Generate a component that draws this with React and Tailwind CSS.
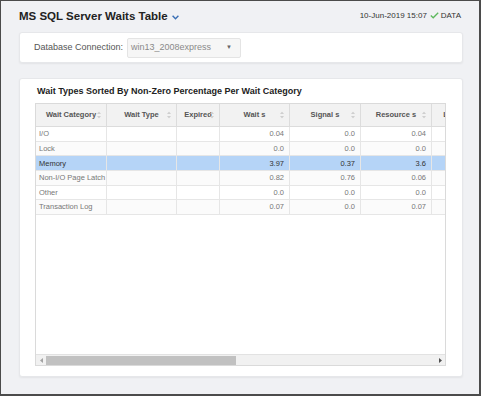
import React from "react";

const columns = [
  { label: "Wait Category", w: "w-[71px]", align: "left" },
  { label: "Wait Type", w: "w-[70px]", align: "left" },
  { label: "Expired", w: "w-[43px]", align: "left" },
  { label: "Wait s", w: "w-[70px]", align: "right" },
  { label: "Signal s", w: "w-[71px]", align: "right" },
  { label: "Resource s", w: "w-[71px]", align: "right" },
  { label: "Latch s", w: "w-[50px]", align: "right" },
];

const rows = [
  ["I/O", "", "", "0.04", "0.0", "0.04", ""],
  ["Lock", "", "", "0.0", "0.0", "0.0", ""],
  ["Memory", "", "", "3.97", "0.37", "3.6", ""],
  ["Non-I/O Page Latch", "", "", "0.82", "0.76", "0.06", ""],
  ["Other", "", "", "0.0", "0.0", "0.0", ""],
  ["Transaction Log", "", "", "0.07", "0.0", "0.07", ""],
];

const SortIcon = () => (
  <svg width="4" height="7" viewBox="0 0 4 7" className="absolute right-[5px] top-1/2 -translate-y-1/2">
    <path d="M2 0 L4 2.5 L0 2.5 Z" fill="#cfcfcf" />
    <path d="M2 7 L4 4.5 L0 4.5 Z" fill="#cfcfcf" />
  </svg>
);

const App = () => {
  return (
    <div
      className="w-[481px] h-[396px] bg-[#f0f1f4] border-l border-t border-r-2 border-b-2 border-[#4b4b4b] pl-[18px] pr-[16px] flex flex-col overflow-hidden"
      style={{ fontFamily: '"Liberation Sans", Arial, sans-serif' }}
    >
      {/* title bar */}
      <div className="h-[31px] flex items-center justify-between">
        <div className="flex items-center">
          <span className="text-[11.5px] font-bold text-[#222]">MS SQL Server Waits Table</span>
          <svg width="7" height="5" viewBox="0 0 7 5" className="ml-[4px] mt-[2px]">
            <polyline points="0.6,0.8 3.5,3.8 6.4,0.8" fill="none" stroke="#3a6fb5" strokeWidth="1.4" />
          </svg>
        </div>
        <div className="flex items-center text-[8px] text-[#333] pr-[2px] -mt-[2px]">
          <span>10-Jun-2019 15:07</span>
          <svg width="9" height="7" viewBox="0 0 9 7" className="ml-[3px] mr-[2px]">
            <polyline points="0.8,3.6 3.2,5.8 8.2,0.8" fill="none" stroke="#5cb85c" strokeWidth="1.3" />
          </svg>
          <span>DATA</span>
        </div>
      </div>

      {/* connection card */}
      <div className="h-[31px] bg-white rounded-[3px] border border-[#e6e7ea] shadow-[0_1px_2px_rgba(0,0,0,0.06)] flex items-center pl-[14px]">
        <span className="text-[9px] text-[#555]">Database Connection:</span>
        <div className="ml-[4px] w-[114px] h-[20px] bg-[#f6f6f6] border border-[#e4e4e4] rounded-[2px] flex items-center justify-between pl-[3px] pr-[8px]">
          <span className="text-[9px] text-[#8a8a8a]">win13_2008express</span>
          <span className="text-[6px] text-[#666]">▼</span>
        </div>
      </div>

      {/* table card */}
      <div className="mt-[15px] h-[299px] bg-white rounded-[3px] border border-[#e6e7ea] shadow-[0_1px_2px_rgba(0,0,0,0.06)] flex flex-col pt-[6px] pb-[10px] pl-[15px] pr-[16px]">
        <div className="h-[12px] leading-[12px] pl-[2px] text-[9px] font-bold text-[#222]">
          Wait Types Sorted By Non-Zero Percentage Per Wait Category
        </div>
        <div className="mt-[6px] flex-1 border border-[#dadada] flex flex-col overflow-hidden">
          <div className="flex-1 overflow-hidden">
            <div className="w-[446px]">
              <div className="flex h-[23px] bg-[#f2f2f2] border-b border-[#dcdcdc]">
                {columns.map((c) => (
                  <div
                    key={c.label}
                    className={`${c.w} shrink-0 relative flex items-center justify-center border-r border-[#dcdcdc] text-[7.5px] font-bold text-[#555] whitespace-nowrap`}
                  >
                    {c.label}
                    <SortIcon />
                  </div>
                ))}
              </div>
              {rows.map((r, i) => {
                const sel = r[0] === "Memory";
                return (
                  <div
                    key={r[0]}
                    className={`flex h-[14.67px] border-b border-[#e6e6e6] ${sel ? "bg-[#b5d4f7]" : i % 2 ? "bg-[#fbfbfb]" : "bg-white"}`}
                  >
                    {columns.map((c, j) => (
                      <div
                        key={c.label}
                        className={`${c.w} shrink-0 flex items-center overflow-hidden whitespace-nowrap border-r border-[#e6e6e6] text-[7.5px] ${sel ? "text-[#333]" : "text-[#777]"} ${c.align === "right" ? "justify-end pr-[5px]" : "pl-[3px]"}`}
                      >
                        {r[j]}
                      </div>
                    ))}
                  </div>
                );
              })}
            </div>
          </div>
          {/* horizontal scrollbar */}
          <div className="h-[11px] bg-[#f1f1f1] border-t border-[#e2e2e2] flex items-center">
            <div className="w-[10px] h-full flex items-center justify-center">
              <svg width="3" height="5" viewBox="0 0 3 5"><path d="M3 0 L0 2.5 L3 5 Z" fill="#a3a3a3" /></svg>
            </div>
            <div className="w-[190px] h-[9px] bg-[#c1c1c1]" />
            <div className="flex-1" />
            <div className="w-[10px] h-full flex items-center justify-center">
              <svg width="3" height="5" viewBox="0 0 3 5"><path d="M0 0 L3 2.5 L0 5 Z" fill="#505050" /></svg>
            </div>
          </div>
        </div>
      </div>
    </div>
  );
};

export default App;
